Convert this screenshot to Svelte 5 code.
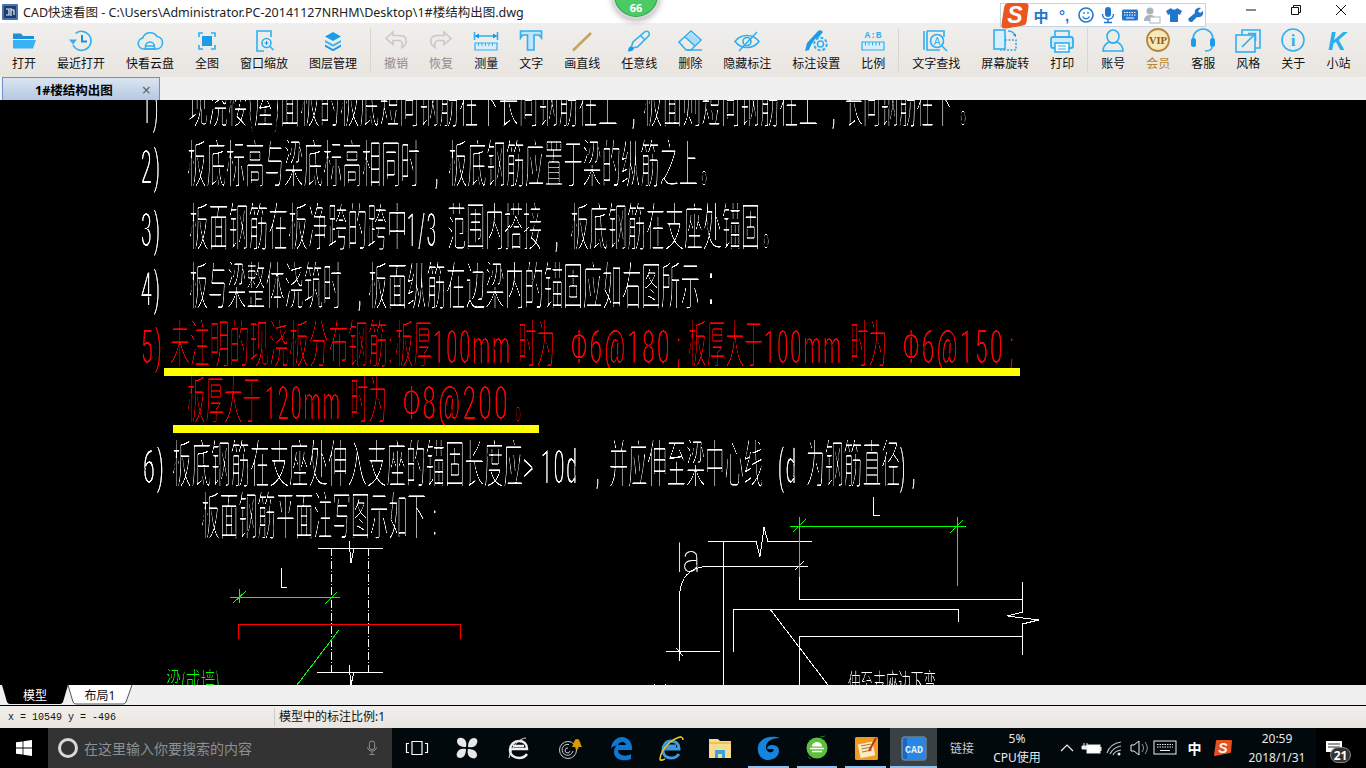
<script>
	const B = 'fill="none" stroke="#2fb0f0" stroke-width="1.6"';
	const G = 'fill="none" stroke="#c9c9c9" stroke-width="1.6"';
	const icons = {
		open: '<path d="M3 6.5h8l2 2.5h11v3H3z" fill="#1c8fd8"/><path d="M3 21.5v-8.5h23l-3 8.5z" fill="#36b3f2"/>',
		recent: `<path d="M8.5 6.5A9.5 9.5 0 1 1 6 18" ${B} stroke-width="2"/><path d="M2 12.5h8l-4 5z" fill="#2fb0f0"/><path d="M15 8v6.5h5" fill="none" stroke="#1c8fd8" stroke-width="2"/>`,
		cloud: `<path d="M7.5 22a5.5 5.5 0 0 1-.8-10.9A8 8 0 0 1 21 9.5 6.3 6.3 0 0 1 21 22z" ${B} stroke-width="1.8"/><path d="M9.5 22v-2.5a4.5 4.5 0 0 1 9 0V22zM10 19h8" ${B}/>`,
		full: `<path d="M6 10V6h4M18 6h4v4M22 18v4h-4M10 22H6v-4" ${B} stroke-width="2"/><rect x="9" y="9" width="10" height="10" fill="#1c9be8"/>`,
		zoom: `<path d="M21 10V4H7v20h7" ${B} stroke-width="1.8"/><circle cx="16.5" cy="16" r="4.5" ${B} stroke-width="1.8"/><path d="M20 19.5l3.5 3.5" ${B} stroke-width="2.2"/><path d="M14.5 16h4M16.5 14v4" stroke="#1c8fd8" fill="none"/>`,
		layers: '<path d="M14 5l8 4.5-8 4.5-8-4.5z" fill="#1c9be8"/><path d="M6 13l8 4.5 8-4.5v2.2l-8 4.5-8-4.5z" fill="#36b3f2"/><path d="M6 17.5l8 4.5 8-4.5v2.2L14 24.2l-8-4.5z" fill="#1c9be8"/>',
		undo: `<path d="M11 5L4 11.5l7 6v-4h6c3 0 4 3 3 7 3-2 5-5 4-8-1-4-4-4-7-4h-6z" ${G}/>`,
		redo: `<path d="M17 5l7 6.5-7 6v-4h-6c-3 0-4 3-3 7-3-2-5-5-4-8 1-4 4-4 7-4h6z" ${G}/>`,
		measure: `<path d="M2.5 5v8M25.5 5v8M3 9h22" ${B} stroke-width="1.2"/><path d="M3 9l4-2.5v5zM25 9l-4-2.5v5z" fill="#1c8fd8"/><path d="M3 16h22v7H3z" fill="#d8effb" stroke="#2fb0f0" stroke-width="1.2"/><path d="M6.5 16v3M10 16v3M13.5 16v3M17 16v3M20.5 16v3" stroke="#2fb0f0"/>`,
		text: `<path d="M3.5 4h21v7l-2.5-3h-5v15h-6.500V8h-5L3.500 11z" fill="#bfe6fa" stroke="#2fb0f0" stroke-width="1.6"/>`,
		line: '<path d="M5 23.500L23 6" stroke="#c7a45c" stroke-width="2.6" fill="none"/>',
		pen: `<path d="M6 21l2-6L19.500 5c1-1 3-1 4 0s1 3 0 4L12.500 20z" ${B}/><path d="M3 24.500c0-3 1-5 3-5l3 2c0 2-3 3-6 3z" fill="#1c9be8"/><path d="M15.500 8.500l4 4" ${B}/>`,
		eraser: `<path d="M15 6l8 7-5 5-8-8z" fill="#a9dcf7"/><path d="M3 15L15 4l10 9-10 10H10z" ${B}/><path d="M9 10l10 9M11 23h15" ${B}/>`,
		eye: `<path d="M2 14.500c6-8 18-8 24 0-6 8-18 8-24 0z" ${B} stroke-width="1.8"/><circle cx="14" cy="14.500" r="4" ${B}/><path d="M6 24L24 5" ${B}/>`,
		set: `<path d="M3 24l2-8L16 4c1-1 3-1 4 0l1 1-5 6-3 1-4 6-2 5z" fill="#1c9be8"/><circle cx="18.500" cy="17" r="3" ${B}/><circle cx="18.500" cy="17" r="6.300" fill="none" stroke="#2fb0f0" stroke-width="2" stroke-dasharray="3 1.800"/>`,
		ratio: `<text x="14" y="11" text-anchor="middle" font-family="Liberation Mono" font-weight="700" font-size="9.500" fill="#2fb0f0">A:B</text><path d="M3 15h22v8H3z" fill="#d8effb" stroke="#2fb0f0" stroke-width="1.200"/><path d="M6.500 15v3.500M10 15v3.500M13.500 15v3.500M17 15v3.500M20.500 15v3.500" stroke="#2fb0f0"/>`,
		find: `<path d="M5 4v19h13M5 4h17v6" ${B} stroke-width="1.600"/><path d="M2 4v19" ${B} stroke-width="1"/><circle cx="15" cy="14" r="6.500" ${B} stroke-width="1.600"/><text x="15" y="17.500" text-anchor="middle" font-family="Liberation Sans" font-size="10" fill="#2fb0f0">A</text><path d="M20 19l5 5" ${B} stroke-width="2.200"/>`,
		rotate: `<rect x="3" y="3" width="11" height="19" fill="#d8effb" stroke="#2fb0f0" stroke-width="1.600"/><path d="M14 13h11v10H10v-1" ${B} stroke-dasharray="2 1.500"/><path d="M17 4c3 0 6 1 7 5" ${B} stroke-width="1.200"/><path d="M25 10l-3-2 3-1z" fill="#1c8fd8"/>`,
		print: `<path d="M7 10V4h14v6" ${B} stroke-width="1.800"/><rect x="3" y="10" width="22" height="11" rx="2" fill="#cdebfb" stroke="#2fb0f0" stroke-width="1.800"/><rect x="7" y="16" width="14" height="9" fill="#fff" stroke="#2fb0f0" stroke-width="1.600"/><path d="M10 19h8M10 22h8" stroke="#2fb0f0"/>`,
		user: `<ellipse cx="14" cy="9.500" rx="6" ry="6.500" ${B} stroke-width="2.200"/><path d="M4 24c0-6 4-8 6-9 3 1.500 5 1.500 8 0 2 1 6 3 6 9z" ${B} stroke-width="2.200"/>`,
		vip: '<circle cx="14" cy="13" r="11" fill="#f8e7b8" stroke="#b4873a" stroke-width="1.800"/><text x="14" y="16.500" text-anchor="middle" font-family="Liberation Serif" font-weight="700" font-size="10.500" fill="#8a5c16">VIP</text>',
		help: `<path d="M4 14V12a10 10 0 0 1 20 0v2" ${B} stroke-width="1.800"/><rect x="2" y="11" width="5" height="9" rx="2.500" fill="#1c9be8"/><rect x="21" y="11" width="5" height="9" rx="2.500" fill="#1c9be8"/><path d="M23 20c0 3-3 4-7 4" ${B}/>`,
		style: `<path d="M8 8V3h18v18h-5" ${B} stroke-width="1.600"/><rect x="2" y="8" width="19" height="17" fill="none" stroke="#2fb0f0" stroke-width="1.600"/><path d="M8 20L21 7M14 6.500h7.500v7.500" ${B} stroke-width="1.800"/>`,
		info: `<circle cx="14" cy="13" r="11" ${B} stroke-width="1.600"/><text x="14" y="19" text-anchor="middle" font-family="Liberation Serif" font-weight="700" font-size="17" fill="#2fb0f0">i</text>`,
		site: '<text x="13" y="23" text-anchor="middle" font-family="Liberation Sans" font-weight="700" font-style="italic" font-size="25" fill="#27aef0">K</text>'
	};

	const groups = [
		[['打开', 'open'], ['最近打开', 'recent'], ['快看云盘', 'cloud'], ['全图', 'full'], ['窗口缩放', 'zoom'], ['图层管理', 'layers']],
		[['撤销', 'undo', 'off'], ['恢复', 'redo', 'off'], ['测量', 'measure'], ['文字', 'text'], ['画直线', 'line'], ['任意线', 'pen'], ['删除', 'eraser'], ['隐藏标注', 'eye'], ['标注设置', 'set'], ['比例', 'ratio']],
		[['文字查找', 'find'], ['屏幕旋转', 'rotate'], ['打印', 'print']],
		[['账号', 'user'], ['会员', 'vip', 'gold'], ['客服', 'help'], ['风格', 'style'], ['关于', 'info'], ['小站', 'site']]
	];

	// drawing text: [text, x1, x2, kind], kind d = latin glyphs
	const white = [
		[125, [['1)', 142, 160, 'd'], ['现浇楼(屋)面板的板底短向钢筋在下长向钢筋在上', 188, 618], [',', 632, 637, 'd'], ['板面则短向钢筋在上', 643, 818], [',', 832, 837, 'd'], ['长向钢筋在下', 845, 952], ['。', 960, 976]]],
		[185, [['2)', 141, 162, 'd'], ['板底标高与梁底标高相同时', 187, 420], [',', 435, 440, 'd'], ['板底钢筋应置于梁的纵筋之上', 448, 698], ['。', 701, 717]]],
		[248, [['3)', 141, 162, 'd'], ['板面钢筋在板净跨的跨中', 189, 407], ['1/3', 407, 438, 'd'], ['范围内搭接', 447, 542], [',', 555, 560, 'd'], ['板底钢筋在支座处锚固', 570, 760], ['。', 763, 779]]],
		[307, [['4)', 141, 162, 'd'], ['板与梁整体浇筑时', 189, 342], [',', 358, 363, 'd'], ['板面纵筋在边梁内的锚固应如右图所示', 368, 700], ['：', 706, 726]]],
		[485, [['6)', 143, 166, 'd'], ['板底钢筋在支座处伸入支座的锚固长度应', 172, 523], ['>', 523, 536, 'd'], ['10d', 541, 579, 'd'], [',', 596, 601, 'd'], ['并应伸至梁中心线', 609, 763], ['(d', 778, 798, 'd'], ['为钢筋直径', 806, 900], [')', 900, 907, 'd'], [',', 912, 917, 'd']]],
		[537, [['板面钢筋平面注写图示如下', 201, 426], [':', 433, 438, 'd']]]
	];
	const red = [
		[365, [['5)', 141, 164, 'd'], ['未注明的现浇板分布钢筋', 170, 388], [':', 389, 393, 'd'], ['板厚', 395, 432], ['100mm', 433, 512, 'd'], ['时为', 518, 555], ['Φ6@180', 571, 672, 'd'], [';', 677, 682, 'd'], ['板厚大于', 688, 763], ['100mm', 764, 843, 'd'], ['时为', 850, 887], ['Φ6@150', 903, 1005, 'd'], [';', 1010, 1015, 'd']]],
		[421, [['板厚大于', 187, 261], ['120mm', 265, 342, 'd'], ['时为', 350, 387], ['Φ8@200', 403, 510, 'd'], ['。', 515, 531]]]
	];

	const taskIcons = [
		[49, 'taskview'], [52, 'fan'], [51, 'ie0'], [51, 'swirl'], [51, 'edge'], [49, 'ie'],
		[49, 'files'], [49, 'g', true], [48, 'green', true], [49, 'note', true], [47, 'cad', true]
	];
</script>

<div class="app">
	<header class="title">
		<svg class="appicon" viewBox="0 0 16 16"><rect width="16" height="16" rx="1" fill="#4a74b0" /><rect x="2" y="2" width="12" height="12" fill="#1b3c6e" /><path d="M4 5h3v6H4M9 4v8M9 6h3v5" fill="none" stroke="#e8f0fa" stroke-width="1.200" /></svg>
		<span class="path">CAD快速看图 - C:\Users\Administrator.PC-20141127NRHM\Desktop\1#楼结构出图.dwg</span>
		<div class="winbtns">
			<svg viewBox="0 0 12 12"><path d="M1 6h10" stroke="#111" fill="none" /></svg>
			<svg viewBox="0 0 12 12"><path d="M1.500 3.500h7v7h-7zM3.500 3.500v-2h7v7h-2" stroke="#111" fill="none" /></svg>
			<svg viewBox="0 0 12 12"><path d="M1 1l10 10M11 1L1 11" stroke="#111" fill="none" /></svg>
		</div>
	</header>

	<nav class="toolbar">
		{#each groups as group, i}
			{#if i > 0}<span class="sep"></span>{/if}
			<div class="group">
				{#each group as [label, icon, kind]}
					<div class="tool {kind ?? ''}">
						<svg viewBox="0 0 28 28">{@html icons[icon]}</svg>
						<span>{label}</span>
					</div>
				{/each}
			</div>
		{/each}
	</nav>

	<div class="tabrow">
		<div class="doctab"><b>1#楼结构出图</b><i>×</i></div>
	</div>

	<svg class="canvas" viewBox="0 100 1366 585" shape-rendering="crispEdges">
		<g class="txt">
			{#each white as [y, segs]}
				{#each segs as [t, x1, x2, kind]}
					<text class="t {kind === 'd' ? 'lat' : ''}" fill="#fff" x={x1} y={y - 2} textLength={x2 - x1} lengthAdjust="spacingAndGlyphs">{t}</text>
				{/each}
			{/each}
			{#each red as [y, segs]}
				{#each segs as [t, x1, x2, kind]}
					<text class="t red {kind === 'd' ? 'lat' : ''}" fill="#f00" x={x1} y={y - 2} textLength={x2 - x1} lengthAdjust="spacingAndGlyphs">{t}</text>
				{/each}
			{/each}
			<text class="t small" fill="#fff" x="848" y="695" textLength="88" lengthAdjust="spacingAndGlyphs">伸至支座边下弯</text>
			<text class="t small" fill="#0f0" x="166" y="694" textLength="54" lengthAdjust="spacingAndGlyphs">梁(或墙)</text>
			<text class="t la" fill="#fff" x="676" y="572" textLength="24" lengthAdjust="spacingAndGlyphs">la</text>
		</g>
		<rect x="164" y="368" width="856" height="8" fill="#ff0" />
		<rect x="173" y="425" width="366" height="8" fill="#ff0" />

		<g class="w">
			<!-- left detail -->
			<path d="M318 548.500h65M317 672.500h66M349 541l2 22 3-15M349 665l2 20 3-13" />
			<path class="dash" d="M331.500 548v124M368.500 548v124" />
			<path d="M281.500 568v19h5" />
			<!-- right detail -->
			<path d="M873.500 497v18h6M708 541.500h48l4 15 4-29 4 14h44" />
			<path d="M723.500 541v144M709 566.500h99M795 570l9-9" />
			<path d="M709 566.500c-20 0-29 12-29.500 30v64M666 651.500h54M676 648l7 8" />
			<path d="M799.500 577v22.500h223M1022.500 582v30l-15 4 31 4-16 4v31" />
			<path d="M733.500 652v-42.500h225v12M770 609l58 76" />
			<path d="M799.500 685v-48.500h223" />
			<path d="M654 684h1M665 684h1" />
		</g>
		<g class="g">
			<path d="M230 597.500h110M239.500 589v14M233 603l13-12M325 604l12-12M339 630l-42 55" />
			<path d="M790 526.500h176M799.500 517v60M957.500 517v69M793 532l13-13M950 533l13-13" />
		</g>
		<path class="r" d="M238.500 639v-14.500h222v14.500" />
	</svg>

	<div class="sheets">
		<svg viewBox="0 0 140 20" width="140" height="20">
			<path d="M2 0l5 17q1 2 3 2h50q2 0 3-2l5-17z" fill="#000" />
			<path d="M68 0l5 17q1 2 3 2h47q2 0 3-2l6-17" fill="#fff" stroke="#555" />
			<text x="35" y="14.500" text-anchor="middle" fill="#fff">模型</text>
			<text x="100" y="14.500" text-anchor="middle" fill="#111">布局1</text>
		</svg>
	</div>

	<div class="status">
		<span class="coords">x = 10549 y = -496</span>
		<span class="scale">模型中的标注比例:1</span>
	</div>

	<footer class="taskbar">
		<div class="start">
			<svg viewBox="0 0 16 16" width="16" height="16"><path d="M0 2.300l6.600-.9v6.200H0zM7.400 1.300L16 0v7.600H7.400zM0 8.400h6.600v6.200L0 13.700zM7.400 8.400H16V16l-8.600-1.300z" fill="#fff" /></svg>
		</div>
		<div class="search">
			<span class="ring"></span>
			<span class="hint">在这里输入你要搜索的内容</span>
			<svg viewBox="0 0 16 18" width="14" height="18"><rect x="5" y="1" width="6" height="10" rx="3" fill="none" stroke="#9a9a9a" /><path d="M3 8c0 6 10 6 10 0M8 13v3M5 16.500h6" fill="none" stroke="#9a9a9a" /></svg>
		</div>
		{#each taskIcons as [w, name, on]}
			<div class="cell {on ? 'on' : ''} {name === 'cad' ? 'active' : ''}" style="width:{w}px">
				<svg viewBox="0 0 28 28" width="28" height="28">
					{#if name === 'taskview'}
						<path d="M9 7.500h10v13H9zM6 9.500H3.500v9H6M22 9.500h2.500v9H22" fill="none" stroke="#fff" stroke-width="1.200" />
					{:else if name === 'fan'}
						<g fill="#e8e8e8"><path d="M13 13C8 13 4 11 4 7c0-3 3-4 5-3 4 1 5 5 4 9z" /><path d="M15 13c0-5 2-9 6-9 3 0 4 3 3 5-1 4-5 5-9 4z" /><path d="M15 15c5 0 9 2 9 6 0 3-3 4-5 3-4-1-5-5-4-9z" /><path d="M13 15c0 5-2 9-6 9-3 0-4-3-3-5 1-4 5-5 9-4z" /></g>
					{:else if name === 'ie0'}
						<path d="M5 15h17c0-5-3-8-8-8s-9 4-9 9 4 8 9 8c4 0 6-1 8-4M8 12h11" fill="none" stroke="#eee" stroke-width="2.500" /><path d="M21 4c-6 0-15 8-17 20" fill="none" stroke="#ddd" stroke-width="1" />
					{:else if name === 'swirl'}
						<circle cx="12" cy="16" r="8.500" fill="none" stroke="#ccc" /><path d="M17 17a5.500 5.500 0 1 1-4-6.500M14 17a2.500 2.500 0 1 1-2-3" fill="none" stroke="#ccc" /><path d="M15 13c3 0 2-8 6-8s3 8 6 8z" fill="#d99a00" /><circle cx="21" cy="14" r="1.500" fill="#d99a00" />
					{:else if name === 'edge'}
						<path d="M4 14C5 7 10 3 15 3c6 0 10 5 10 11v2H11c0 6 8 7 13 4v5c-7 3-17 1-17-7 0-3 1-5 3-7-2 1-5 2-6 3zM11 11h8c0-4-7-4-8 0z" fill="#0b78d8" />
					{:else if name === 'ie'}
						<path d="M6 15h16c0-5-3-8-8-8s-8 4-8 9 3 8 8 8c4 0 6-1 8-4M9 12h10" fill="none" stroke="#3a9be0" stroke-width="3" /><path d="M24 3C16 4 4 14 3 25c0 2 3 1 5 0M20 4c4-2 6-1 6 2" fill="none" stroke="#f1c21b" stroke-width="1.600" />
					{:else if name === 'files'}
						<path d="M3 5h9l2 2h11v17H3z" fill="#f6dc8c" /><path d="M3 8h22v2H3z" fill="#e9c25c" /><path d="M9 24v-8h10v8h-3v-4h-4v4z" fill="#2fa6e8" />
					{:else if name === 'g'}
						<path d="M25 4c-6-2-15-2-20 4-5 7-1 18 8 18 6 0 11-4 11-9 0-4-3-6-7-6-3 0-5 2-5 4h6c1 0 1 2-1 3-3 1-6-1-6-5 0-6 7-9 14-9z" fill="#1684dc" />
					{:else if name === 'green'}
						<circle cx="14" cy="14" r="10.500" fill="#5cc13c" /><path d="M7 14.500h14M9 17.500h10" stroke="#fff" stroke-width="1.500" /><path d="M9 12.500c0-6 10-6 10 0z" fill="#fff" /><path d="M17 3l5-1M5 23l3 2" stroke="#1d7a22" fill="none" />
					{:else if name === 'note'}
						<rect x="3" y="3" width="23" height="23" rx="1.500" fill="#f09a20" /><rect x="7" y="9" width="15" height="14" fill="#fbeac4" transform="rotate(-12 14 16)" /><path d="M9 12l10-2M9.500 15l10-2M10 18l10-2" stroke="#a87838" fill="none" /><path d="M24 4l-7 13" stroke="#c03810" stroke-width="2" fill="none" />
					{:else}
						<rect x="2" y="3" width="24" height="23" rx="2" fill="#1a66c0" stroke="#8aa0b8" /><rect x="7" y="3" width="19" height="23" fill="#2b86e0" /><text x="14" y="19" text-anchor="middle" font-family="Liberation Mono" font-weight="700" font-size="10" fill="#dff0ff">CAD</text>
					{/if}
				</svg>
			</div>
		{/each}
		<span class="link">链接</span>
		<div class="cpu"><span>5%</span><span>CPU使用</span></div>
		<div class="tray">
			<svg viewBox="0 0 24 20" style="width:24px"><path d="M6 13l6-6 6 6" fill="none" stroke="#eee" stroke-width="1.200" /></svg>
			<svg viewBox="0 0 24 20" style="width:24px"><path d="M5 5v3M8 5v3M3 8h7v3H3z" stroke="#eee" fill="#eee" /><rect x="8" y="7" width="13" height="8" fill="#fff" stroke="#eee" /><rect x="21" y="9" width="1.500" height="4" fill="#eee" /></svg>
			<svg viewBox="0 0 25 20" style="width:25px"><path d="M4 15c2-6 7-10 14-11M7 16c2-4 5-7 11-8M10 17c1-3 3-4 8-5" fill="none" stroke="#bbb" stroke-width="1.200" /><circle cx="16" cy="16" r="1.500" fill="#eee" /></svg>
			<svg viewBox="0 0 22 20" style="width:22px"><path d="M3 7h3l5-4v14l-5-4H3z" fill="none" stroke="#eee" /><path d="M14 6c2 3 2 5 0 8M17 4c3 4 3 8 0 12" fill="none" stroke="#999" /></svg>
			<svg viewBox="0 0 31 20" style="width:31px"><rect x="4" y="3" width="22" height="13" fill="none" stroke="#eee" /><path d="M7 6.500h16M7 9h16" stroke="#eee" stroke-dasharray="1.500 1" /><path d="M10 12.500h10" stroke="#eee" /></svg>
			<span class="ime">中</span>
			<svg viewBox="0 0 30 20" style="width:30px"><path d="M8 3q0-1 1-1h14q1 0 1 1l-1 11q0 1-1 1L7 18q-1 0-1-1z" fill="#e8501e" /><text x="15" y="15" text-anchor="middle" font-family="Liberation Sans" font-weight="700" font-style="italic" font-size="14" fill="#fff">S</text></svg>
		</div>
		<div class="clock"><span>20:59</span><span>2018/1/31</span></div>
		<div class="notify">
			<svg viewBox="0 0 16 14" width="16" height="14"><path d="M0 0h16v11H0z" fill="#fff" /><path d="M2 3h12M2 6h12" stroke="#333" /></svg>
			<span>21</span>
		</div>
	</footer>

	<!-- overlays above the title bar -->
	<div class="ball"><b>66</b></div>
	<div class="ime-bar">
		<svg class="slogo" viewBox="0 0 28 27" width="28" height="27"><path d="M8 1h16q4 0 3.500 4l-2 15q-.5 3-3.500 3.500L5 26.500q-5 .5-4.500-4L3 6q.6-5 5-5z" fill="#ea5520" /><text x="14" y="21" text-anchor="middle" font-family="Liberation Sans" font-weight="700" font-style="italic" font-size="23" fill="#fff">S</text></svg>
		<span class="zh">中</span>
		<span class="punc">°,</span>
		<svg viewBox="0 0 18 18" width="18" height="18"><circle cx="9" cy="9" r="7" fill="none" stroke="#2277cc" stroke-width="1.600" /><path d="M5.500 10.500c1.500 3 5.500 3 7 0M7 6v2M11 6v2" fill="none" stroke="#2277cc" stroke-width="1.300" /></svg>
		<svg viewBox="0 0 18 18" width="18" height="18"><rect x="6" y="1" width="6" height="10" rx="3" fill="#2277cc" /><path d="M3.500 8c0 7 11 7 11 0M9 13v3M5 16.500h8" fill="none" stroke="#2277cc" stroke-width="1.400" /></svg>
		<svg viewBox="0 0 18 18" width="18" height="18"><rect x="1" y="3.500" width="16" height="11" rx="1.500" fill="#2277cc" /><path d="M3 6.500h12M3 9h12" stroke="#fff" stroke-dasharray="1.500 1" /><path d="M5 12h8" stroke="#fff" /></svg>
		<svg viewBox="0 0 18 18" width="18" height="18"><circle cx="7" cy="5" r="3.500" fill="#a9b4bf" /><path d="M1 15c0-5 3-6 6-6s6 1 6 6z" fill="#a9b4bf" /><rect x="7" y="11" width="10" height="6" fill="#fff" stroke="#a9b4bf" /></svg>
		<svg viewBox="0 0 18 18" width="18" height="18"><path d="M6 2L1 5l2 4 2-1v8h8V8l2 1 2-4-5-3c-1 2-5 2-6 0z" fill="#2277cc" /></svg>
		<svg viewBox="0 0 18 18" width="18" height="18"><path d="M2 15c-1-1-1-2 0-3l6-5c-1-3 2-6 6-5l-3 3 2 2 3-2c1 4-2 7-6 6l-5 5c-1 0-2 0-3-1z" fill="#2277cc" /></svg>
	</div>
</div>

<style>
	:global(body) {
		margin: 0;
		background: #000;
	}

	.app {
		position: relative;
		width: 1366px;
		height: 768px;
		overflow: hidden;
		display: flex;
		flex-direction: column;
		font-family: "Noto Sans", "Noto Sans CJK SC", sans-serif;
		font-size: 12px;
		color: #111;
	}

	.title {
		height: 23px;
		flex: none;
		background: #fff;
		display: flex;
		align-items: center;
		padding-left: 2px;
	}

	.appicon {
		width: 16px;
		height: 16px;
		margin-right: 5px;
	}

	.path {
		font-size: 12.5px;
		white-space: nowrap;
		margin-top: -1px;
		color: #222;
	}

	.winbtns {
		margin-left: auto;
		display: flex;
		gap: 33px;
		padding-right: 19px;
		margin-top: -3px;
	}

	.winbtns svg {
		width: 12px;
		height: 12px;
	}

	.toolbar {
		height: 54px;
		flex: none;
		box-sizing: border-box;
		padding-left: 12px;
		display: flex;
		background: linear-gradient(#f0efed, #e9e5e0);
	}

	.group {
		display: flex;
		gap: 21px;
	}

	.sep {
		width: 1px;
		height: 44px;
		margin: 5px 13px 0;
		background: #d8d6d3;
	}

	.tool {
		display: flex;
		flex-direction: column;
		align-items: center;
		padding-top: 4px;
		white-space: nowrap;
	}

	.tool svg {
		width: 28px;
		height: 28px;
		margin: 0 -4px;
	}

	.tool span {
		line-height: 16px;
		margin-top: 1px;
	}

	.tool.off span {
		color: #8d8d8d;
	}

	.tool.gold span {
		color: #b5842f;
	}

	.tabrow {
		height: 23px;
		flex: none;
		background: #f0f0f0;
		padding-left: 2px;
	}

	.doctab {
		width: 158px;
		height: 23px;
		box-sizing: border-box;
		border: 1px solid #6c93c6;
		border-bottom: 0;
		background: linear-gradient(#dbe5f1, #b4c8e2);
		display: flex;
		align-items: center;
		position: relative;
	}

	.doctab b {
		margin-left: 32px;
		font-size: 12.5px;
		color: #000;
	}

	.doctab i {
		position: absolute;
		right: 8px;
		top: 1px;
		font-style: normal;
		font-size: 16px;
		color: #666;
	}

	.canvas {
		display: block;
		width: 1366px;
		height: 585px;
		flex: none;
		background: #000;
	}

	.txt {
		filter: contrast(3) brightness(1.25);
	}

	.t {
		font-family: "Noto Sans CJK SC", sans-serif;
		font-size: 52px;
		font-weight: 200;
		stroke: #000;
		stroke-width: 1.1px;
	}

	.t.red {
		stroke-width: 1px;
	}

	.t.lat {
		font-family: Roboto, "Liberation Sans", sans-serif;
		font-size: 47px;
		font-weight: 300;
		letter-spacing: 5px;
		stroke-width: 0.5px;
	}

	.t.small {
		font-size: 30px;
		stroke-width: 0.5px;
	}

	.t.la {
		font-family: Roboto, "Liberation Sans", sans-serif;
		font-size: 38px;
		font-weight: 100;
		stroke-width: 0.2px;
	}

	.w path,
	.g path,
	.r {
		fill: none;
		stroke-width: 1;
	}

	.w path {
		stroke: #fff;
	}

	.w path.dash {
		stroke-dasharray: 8 2 1 2;
	}

	.g path {
		stroke: #0f0;
	}

	.r {
		stroke: #f00;
	}

	.sheets {
		height: 20px;
		flex: none;
		background: #f0f0f0;
		border-bottom: 1px solid #000;
	}

	.sheets svg {
		display: block;
	}

	.sheets text {
		font-size: 12px;
	}

	.status {
		height: 22px;
		flex: none;
		display: flex;
		align-items: center;
		background: linear-gradient(#f0efed, #e9e5e0);
	}

	.coords {
		width: 266px;
		padding-left: 8px;
		font-family: "Liberation Mono", monospace;
		font-size: 10px;
	}

	.scale {
		border-left: 1px solid #cfcdca;
		padding-left: 4px;
		line-height: 18px;
	}

	.taskbar {
		height: 40px;
		flex: none;
		display: flex;
		align-items: center;
		background: #02090d;
		color: #e8e8e8;
	}

	.start {
		width: 48px;
		height: 40px;
		background: #000;
		display: flex;
		align-items: center;
		justify-content: center;
	}

	.search {
		width: 344px;
		height: 40px;
		box-sizing: border-box;
		padding: 0 13px 0 10px;
		background: #333;
		display: flex;
		align-items: center;
	}

	.ring {
		width: 14px;
		height: 14px;
		border: 3px solid #d8d8d8;
		border-radius: 50%;
		margin-right: 6px;
	}

	.hint {
		flex: 1;
		font-size: 14px;
		color: #8b9094;
	}

	.cell {
		height: 40px;
		box-sizing: border-box;
		display: flex;
		align-items: center;
		justify-content: center;
		position: relative;
	}

	.cell.on::after {
		content: "";
		position: absolute;
		left: 4px;
		right: 4px;
		bottom: 0;
		height: 2px;
		background: #8fc3ee;
	}

	.cell.active {
		background: #3a4246;
	}

	.cell.active::after {
		left: 0;
		right: 0;
	}

	.link {
		width: 50px;
		text-align: center;
		color: #ccc;
		margin-top: -1px;
	}

	.cpu {
		width: 60px;
		display: flex;
		flex-direction: column;
		align-items: center;
		line-height: 19px;
	}

	.tray {
		margin-left: 8px;
		display: flex;
		align-items: center;
	}

	.tray svg {
		height: 20px;
	}

	.ime {
		width: 27px;
		text-align: center;
		font-size: 14px;
		font-weight: 700;
		color: #fff;
	}

	.clock {
		width: 78px;
		display: flex;
		flex-direction: column;
		align-items: center;
		line-height: 19px;
		white-space: nowrap;
	}

	.notify {
		flex: 1;
		height: 40px;
		background: #000;
		position: relative;
	}

	.notify svg {
		position: absolute;
		left: 10px;
		top: 13px;
	}

	.notify span {
		position: absolute;
		left: 14px;
		top: 19px;
		width: 21px;
		height: 16px;
		line-height: 15px;
		text-align: center;
		border-radius: 9px;
		background: #333;
		border: 1px solid #888;
		font-weight: 700;
		font-size: 12px;
		color: #fff;
		box-sizing: border-box;
	}

	.ball {
		position: absolute;
		left: 612px;
		top: -29px;
		width: 48px;
		height: 48px;
		box-sizing: border-box;
		border-radius: 50%;
		background: #4ccb64;
		border: 2px solid #d8d8d8;
		box-shadow: 0 2px 6px rgba(0, 0, 0, 0.3), inset 0 0 0 1px #2f9e48;
		text-align: center;
		color: #fff;
		font-size: 11px;
		line-height: 14px;
		padding-top: 28px;
	}

	.ime-bar {
		position: absolute;
		left: 1000px;
		top: 3px;
		width: 206px;
		height: 24px;
		box-sizing: border-box;
		border: 1px solid #c6d4e2;
		background: rgba(255, 255, 255, 0.95);
		display: flex;
		align-items: center;
		gap: 4px;
		padding-left: 31px;
	}

	.slogo {
		position: absolute;
		left: 0;
		top: -2px;
	}

	.zh {
		font-size: 15px;
		font-weight: 700;
		color: #2277cc;
		width: 18px;
		text-align: center;
		margin-right: 1px;
	}

	.punc {
		font-family: "Liberation Sans", sans-serif;
		font-size: 15px;
		font-weight: 700;
		color: #2277cc;
		width: 18px;
		text-align: center;
	}
</style>
